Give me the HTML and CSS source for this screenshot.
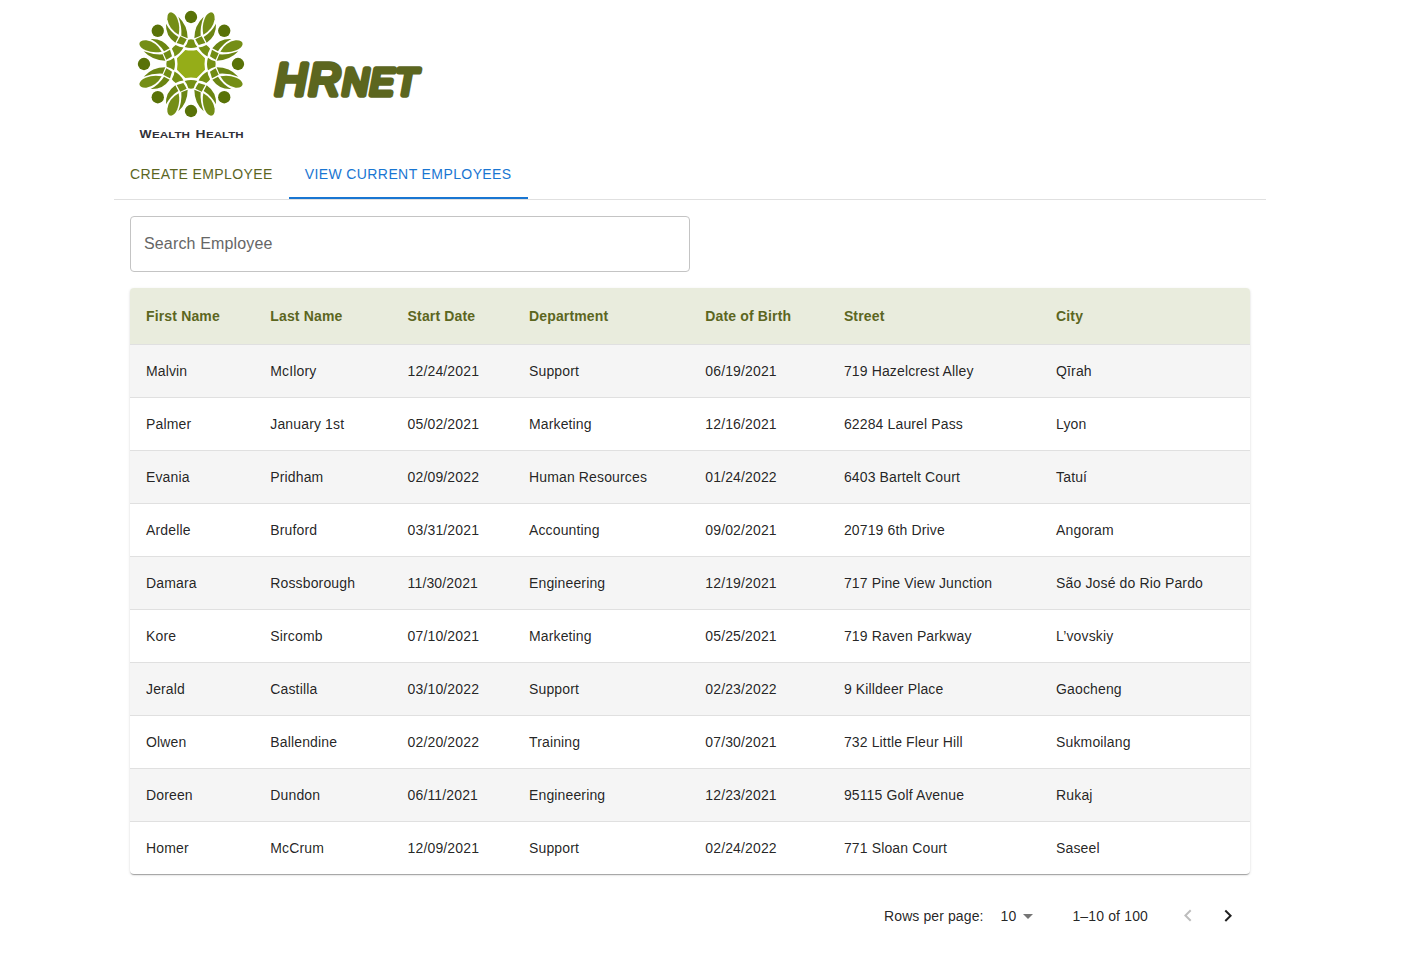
FILE: index.html
```html
<!DOCTYPE html>
<html lang="en">
<head>
<meta charset="utf-8">
<title>HRnet</title>
<link rel="stylesheet" href="styles.css">
</head>
<body>
<div class="container">
  <header class="header">
    <svg class="logo" width="122" height="144" viewBox="0 0 122 144" role="img" aria-label="Wealth Health">
      <defs>
        <g id="leaf">
          <path fill="#748e16" d="M-37-88Q-66-104-71-134Q-72-154-60-155Q-48-153-41-136Q-32-113-37-88Z"/>
          <path fill="#6b8512" d="M-38-142Q-10-116-10-77L-29-85Q-27-112-38-142Z"/>
          <path fill="#6b8512" d="M-75-121Q-77-85-47-64L-38-81Q-61-95-75-121Z"/>
          <path fill="#718c13" d="M-32-83L-13-74Q-18-64-23-57Q-32-60-43-63Q-37-74-32-83Z"/>
        </g>
        <g id="person">
          <circle cy="-141" r="18.5" fill="#597208"/>
          <path fill="#748f13" d="M-8-73Q0-75 8-73Q11-60 19-51Q0-45-19-51Q-11-60-8-73Z"/>
        </g>
        <g id="quarter">
          <use href="#leaf"/>
          <use href="#leaf" transform="matrix(0 1 1 0 0 0)"/>
          <use href="#person"/>
          <use href="#person" transform="rotate(-45)"/>
        </g>
      </defs>
      <g transform="translate(61 64) scale(.3333)">
        <path fill="#95ad18" d="M-17-42Q0-39 17-42Q28-31 42-17Q39 0 42 17Q28 31 17 42Q0 39-17 42Q-28 31-42 17Q-39 0-42-17Q-28-31-17-42Z"/>
        <use href="#quarter"/>
        <use href="#quarter" transform="rotate(90)"/>
        <use href="#quarter" transform="rotate(180)"/>
        <use href="#quarter" transform="rotate(270)"/>
      </g>
      <text class="logo-text" y="138"><tspan class="cap" x="9.5" textLength="12" lengthAdjust="spacingAndGlyphs">W</tspan><tspan x="22" textLength="38" lengthAdjust="spacingAndGlyphs">EALTH</tspan> <tspan class="cap" x="65.5" textLength="10" lengthAdjust="spacingAndGlyphs">H</tspan><tspan x="76" textLength="37.500" lengthAdjust="spacingAndGlyphs">EALTH</tspan></text>
    </svg>
    <h1 class="brand">
      <svg width="160" height="60" viewBox="0 0 160 60"><text class="brand-text" x="5" y="44">HR<tspan class="brand-small">NET</tspan></text></svg>
    </h1>
  </header>
  <nav class="tabs">
    <a class="tab">Create Employee</a>
    <a class="tab active">View Current Employees</a>
  </nav>
  <main class="content">
    <div class="search">Search Employee</div>
    <table class="employees">
      <colgroup><col class="c1"><col class="c2"><col class="c3"><col class="c4"><col class="c5"><col class="c6"><col></colgroup>
      <thead><tr><th>First Name</th><th>Last Name</th><th>Start Date</th><th>Department</th><th>Date of Birth</th><th>Street</th><th>City</th></tr></thead>
      <tbody>
        <tr><td>Malvin</td><td>McIlory</td><td>12/24/2021</td><td>Support</td><td>06/19/2021</td><td>719 Hazelcrest Alley</td><td>Qīrah</td></tr>
        <tr><td>Palmer</td><td>January 1st</td><td>05/02/2021</td><td>Marketing</td><td>12/16/2021</td><td>62284 Laurel Pass</td><td>Lyon</td></tr>
        <tr><td>Evania</td><td>Pridham</td><td>02/09/2022</td><td>Human Resources</td><td>01/24/2022</td><td>6403 Bartelt Court</td><td>Tatuí</td></tr>
        <tr><td>Ardelle</td><td>Bruford</td><td>03/31/2021</td><td>Accounting</td><td>09/02/2021</td><td>20719 6th Drive</td><td>Angoram</td></tr>
        <tr><td>Damara</td><td>Rossborough</td><td>11/30/2021</td><td>Engineering</td><td>12/19/2021</td><td>717 Pine View Junction</td><td>São José do Rio Pardo</td></tr>
        <tr><td>Kore</td><td>Sircomb</td><td>07/10/2021</td><td>Marketing</td><td>05/25/2021</td><td>719 Raven Parkway</td><td>L’vovskiy</td></tr>
        <tr><td>Jerald</td><td>Castilla</td><td>03/10/2022</td><td>Support</td><td>02/23/2022</td><td>9 Killdeer Place</td><td>Gaocheng</td></tr>
        <tr><td>Olwen</td><td>Ballendine</td><td>02/20/2022</td><td>Training</td><td>07/30/2021</td><td>732 Little Fleur Hill</td><td>Sukmoilang</td></tr>
        <tr><td>Doreen</td><td>Dundon</td><td>06/11/2021</td><td>Engineering</td><td>12/23/2021</td><td>95115 Golf Avenue</td><td>Rukaj</td></tr>
        <tr><td>Homer</td><td>McCrum</td><td>12/09/2021</td><td>Support</td><td>02/24/2022</td><td>771 Sloan Court</td><td>Saseel</td></tr>
      </tbody>
    </table>
    <div class="pagination">
      <span class="rows-label">Rows per page:</span>
      <span class="rows-value">10</span>
      <svg class="caret" width="24" height="24" viewBox="0 0 24 24"><path d="M7 10l5 5 5-5z"/></svg>
      <span class="range">1–10 of 100</span>
      <span class="arrow disabled"><svg width="24" height="24" viewBox="0 0 24 24"><path d="M15.41 16.09l-4.58-4.59 4.58-4.59L14 5.5l-6 6 6 6z"/></svg></span>
      <span class="arrow"><svg width="24" height="24" viewBox="0 0 24 24"><path d="M8.59 16.34l4.58-4.59-4.58-4.59L10 5.75l6 6-6 6z"/></svg></span>
    </div>
  </main>
</div>
</body>
</html>
```
FILE: styles.css
```css
* { box-sizing: border-box; }
body {
  margin: 0;
  background: #fff;
  color: rgba(0, 0, 0, .87);
  font: 14px/20px "Liberation Sans", Arial, sans-serif;
  letter-spacing: .15px;
}
.container { width: 1152px; margin-left: 114px; }
.header { display: flex; height: 150px; padding-left: 16px; }
.logo { flex: none; }
.logo-text {
  font: bold 9px "Liberation Sans", Arial, sans-serif;
  letter-spacing: 0;
  fill: #303038;
}
.logo-text .cap { font-size: 11px; }
.brand { margin: 51px 0 0 18px; }
.brand svg { display: block; }
.brand-text {
  font: italic 44px "Liberation Sans", Arial, sans-serif;
  letter-spacing: 2px;
  fill: #5c661f;
  stroke: #5c661f;
  stroke-width: 5.5px;
  stroke-linejoin: round;
}
.brand-small { font-size: 36px; letter-spacing: 1.5px; }
.tabs { display: flex; height: 50px; border-bottom: 1px solid #e0e0e0; }
.tab {
  height: 49px;
  padding: 14px 16px 0;
  color: #5c661f;
  letter-spacing: .4px;
  text-transform: uppercase;
}
.tab.active { color: #1976d2; border-bottom: 2px solid #1976d2; }
.content { padding: 16px; }
.search {
  width: 560px;
  height: 56px;
  padding: 15px 13px;
  border: 1px solid #c4c4c4;
  border-radius: 4px;
  color: #666;
  font-size: 16px;
  line-height: 23px;
}
.employees {
  width: 1120px;
  margin-top: 16px;
  table-layout: fixed;
  border-spacing: 0;
  border-radius: 4px;
  overflow: hidden;
  box-shadow: 0 2px 1px -1px rgba(0,0,0,.2), 0 1px 1px rgba(0,0,0,.14), 0 1px 3px rgba(0,0,0,.12);
}
.c1 { width: 124.3px; }
.c2 { width: 137.3px; }
.c3 { width: 121.4px; }
.c4 { width: 176.3px; }
.c5 { width: 138.6px; }
.c6 { width: 212.2px; }
th, td { padding: 0 16px; border-bottom: 1px solid #e0e0e0; text-align: left; white-space: nowrap; }
th { height: 57px; background: #e9ecdd; color: #5c661f; }
td { height: 53px; letter-spacing: .14px; }
tbody tr:nth-child(odd) { background: #f5f5f5; }
tbody tr:last-child td { height: 52px; border-bottom: 0; }
.pagination { display: flex; align-items: center; justify-content: flex-end; height: 52px; margin-top: 16px; padding-right: 2px; }
.rows-label { letter-spacing: .1px; }
.rows-value { margin-left: 17px; }
.caret { margin-right: 32px; fill: #757575; }
.range { margin-right: 20px; }
.arrow { display: flex; width: 40px; padding: 8px; }
.arrow svg { fill: #212121; }
.arrow.disabled svg { fill: #bdbdbd; }
```
